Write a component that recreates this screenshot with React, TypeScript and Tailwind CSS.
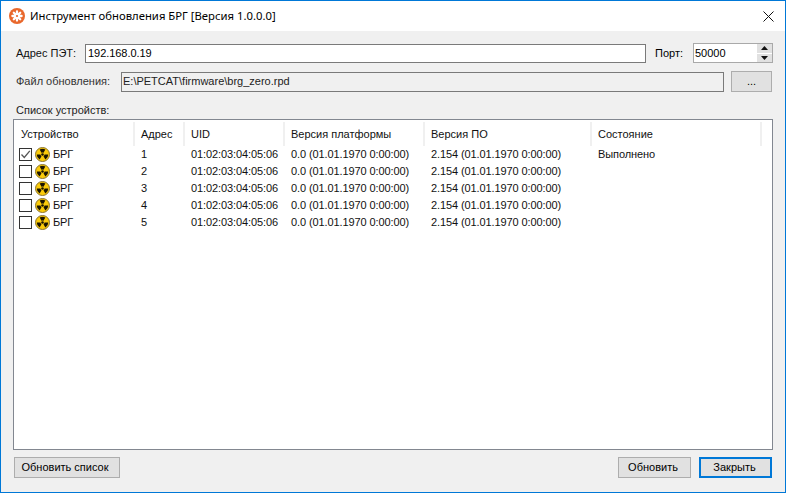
const COLUMNS = ['Устройство', 'Адрес', 'UID', 'Версия платформы', 'Версия ПО', 'Состояние'];
const GRID = 'grid grid-cols-[120px_50px_100px_140px_167px_170px]';

const ROWS = [
  { addr: '1', checked: true, state: 'Выполнено' },
  { addr: '2', checked: false, state: '' },
  { addr: '3', checked: false, state: '' },
  { addr: '4', checked: false, state: '' },
  { addr: '5', checked: false, state: '' },
];

function AppIcon() {
  return (
    <svg width="16" height="16" viewBox="0 0 16 16" className="shrink-0">
      <circle cx="8" cy="8" r="8" fill="#e9682c" />
      <g stroke="#fff" strokeWidth="2.3" strokeLinecap="round">
        <path d="M8 3.4v9.2M3.4 8h9.2M4.8 4.8l6.4 6.4M11.2 4.8l-6.4 6.4" />
      </g>
      <circle cx="8" cy="8" r="1.1" fill="#e9682c" />
    </svg>
  );
}

function RadiationIcon() {
  return (
    <svg width="15" height="15" viewBox="0 0 30 30" className="shrink-0 block">
      <circle cx="15" cy="15" r="14" fill="#fbcb0a" stroke="#8a7430" strokeWidth="2" />
      <path d="M15 15L9.25 5.04A11.5 11.5 0 0 1 20.75 5.04Z" fill="#1a1400" />
      <path d="M15 15L26.5 15A11.5 11.5 0 0 1 20.75 24.96Z" fill="#1a1400" />
      <path d="M15 15L9.25 24.96A11.5 11.5 0 0 1 3.5 15Z" fill="#1a1400" />
      <circle cx="15" cy="15" r="4" fill="#fbcb0a" />
      <circle cx="15" cy="15" r="2.6" fill="#1a1400" />
    </svg>
  );
}

function Checkbox({ checked }: { checked: boolean }) {
  return (
    <span className="w-[13px] h-[13px] border border-[#333] bg-white flex items-center justify-center shrink-0">
      {checked && (
        <svg width="11" height="11" viewBox="0 0 11 11">
          <path d="M1.5 5.5l2.8 3L9.8 1.8" fill="none" stroke="#555" strokeWidth="1.3" />
        </svg>
      )}
    </span>
  );
}

function Button({ label, primary, className }: { label: string; primary?: boolean; className: string }) {
  return (
    <button
      className={
        'h-[21px] bg-[#e1e1e1] text-[11px] text-black flex items-center justify-center ' +
        (primary ? 'border-2 border-[#0078d7] ' : 'border border-[#adadad] ') +
        className
      }
    >
      {label}
    </button>
  );
}

export default function App() {
  return (
    <div
      className="w-[786px] h-[493px] flex flex-col border border-[#0078d7] bg-[#f0f0f0] text-[11px] text-black overflow-hidden"
      style={{ fontFamily: '"Liberation Sans", Arial, sans-serif' }}
    >
      {/* Title bar */}
      <div className="h-[30px] bg-white flex items-center pl-2 shrink-0">
        <AppIcon />
        <span className="ml-[5px] text-[11.3px] text-black" style={{ fontFamily: '"Noto Sans", sans-serif' }}>
          Инструмент обновления БРГ [Версия 1.0.0.0]
        </span>
        <svg width="11" height="11" viewBox="0 0 11 11" className="ml-auto mr-[11px]">
          <path d="M0.5 0.5l10 10M10.5 0.5l-10 10" stroke="#111" strokeWidth="1" />
        </svg>
      </div>

      <div className="flex-1 flex flex-col pl-[12px] pr-[12px] min-h-0">
        {/* Address row */}
        <div className="flex items-center mt-3 h-[20px] pl-[3px]">
          <span className="w-[69px] text-[#111]">Адрес ПЭТ:</span>
          <div className="w-[561px] h-[19px] border border-[#7a7a7a] bg-white flex items-center pl-[2px] tracking-[-0.05px]">192.168.0.19</div>
          <span className="ml-[9px] w-[38px]">Порт:</span>
          <div className="w-[80px] h-[20px] border border-[#a9a9a9] bg-white flex items-center pl-[1px]">
            <span className="flex-1">50000</span>
            <div className="w-[15px] h-full flex flex-col">
              <div className="flex-1 bg-[#e1e1e1] border-b border-white flex items-center justify-center">
                <svg width="7" height="4" viewBox="0 0 7 4"><path d="M3.5 0L7 4H0z" fill="#111" /></svg>
              </div>
              <div className="flex-1 bg-[#e1e1e1] flex items-center justify-center">
                <svg width="7" height="4" viewBox="0 0 7 4"><path d="M0 0h7L3.5 4z" fill="#111" /></svg>
              </div>
            </div>
          </div>
        </div>

        {/* File row */}
        <div className="flex items-center mt-[8px] h-[21px] pl-[3px]">
          <span className="w-[105px] text-[#333]">Файл обновления:</span>
          <div className="w-[603px] h-[20px] border border-[#7a7a7a] bg-[#f0f0f0] flex items-center pl-[1px] text-[#222]">
            E:\PETCAT\firmware\brg_zero.rpd
          </div>
          <Button label="..." className="ml-[7px] w-[41px]" />
        </div>

        <div className="mt-[11px] h-[15px] leading-[15px] pl-[3px] text-[#222]">Список устройств:</div>

        {/* Device list */}
        <div className="mt-[1px] h-[331px] w-[760px] border border-[#828790] bg-white flex flex-col overflow-hidden pl-[1px]">
          <div className={GRID + ' h-[26px] pt-[2px]'}>
            {COLUMNS.map((c) => (
              <div key={c} className="border-r-2 border-[#f0f0f0] flex items-center pl-[6px] text-[#111]">
                {c}
              </div>
            ))}
          </div>
          {ROWS.map((r) => (
            <div key={r.addr} className={GRID + ' h-[17px] items-center text-[#111] tracking-[-0.1px]'}>
              <div className="flex items-center pl-[4px]">
                <Checkbox checked={r.checked} />
                <span className="ml-[3px]"><RadiationIcon /></span>
                <span className="ml-[3px]">БРГ</span>
              </div>
              <div className="pl-[6px]">{r.addr}</div>
              <div className="pl-[6px]">01:02:03:04:05:06</div>
              <div className="pl-[6px]">0.0 (01.01.1970 0:00:00)</div>
              <div className="pl-[6px]">2.154 (01.01.1970 0:00:00)</div>
              <div className="pl-[6px]">{r.state}</div>
            </div>
          ))}
        </div>

        {/* Bottom buttons */}
        <div className="flex items-center mt-[7px] pl-[1px]">
          <Button label="Обновить список" className="w-[106px] pr-[4px]" />
          <Button label="Обновить" className="ml-auto w-[73px] pr-[3px]" />
          <Button label="Закрыть" primary className="ml-[8px] w-[73px] mr-[1px] pr-[2px]" />
        </div>
      </div>
    </div>
  );
}
